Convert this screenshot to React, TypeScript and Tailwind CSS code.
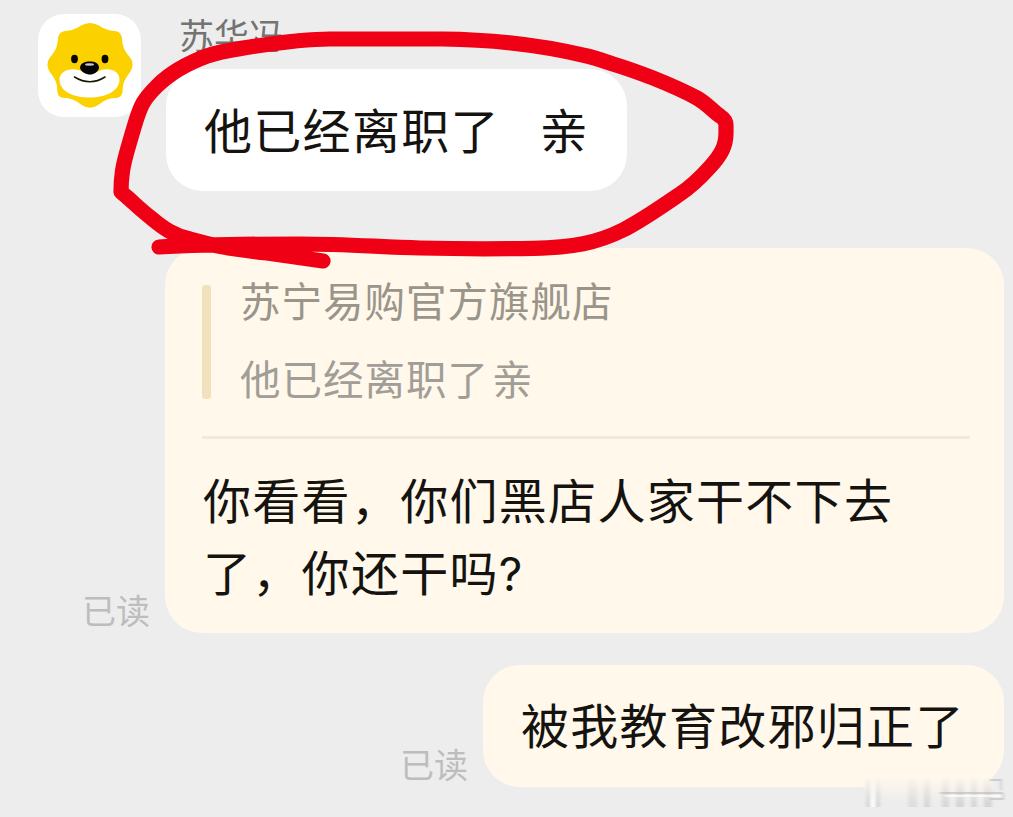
import type { ReactNode } from "react";

const FONT = "font-['Noto_Sans_CJK_SC',sans-serif]";

/** 水印竖条：x、宽度、深浅 */
const SMEARS = [
  { x: 866, w: 4, fill: "#c4c4c4", opacity: 0.6 },
  { x: 871, w: 4, fill: "#ffffff", opacity: 1 },
  { x: 876, w: 4, fill: "#c4c4c4", opacity: 0.6 },
  { x: 908, w: 9, fill: "#cccccc", opacity: 0.5 },
  { x: 924, w: 6, fill: "#c4c4c4", opacity: 0.6 },
  { x: 942, w: 7, fill: "#c8c8c8", opacity: 0.65 },
  { x: 956, w: 8, fill: "#c4c4c4", opacity: 0.65 },
  { x: 971, w: 6, fill: "#c8c8c8", opacity: 0.65 },
  { x: 984, w: 8, fill: "#c4c4c4", opacity: 0.65 },
];

function Avatar() {
  return (
    <svg viewBox="0 0 103 103" className="mt-3.5 size-[103px] shrink-0 rounded-[26px] bg-white">
      <path
        d="M43 11.500Q52 6.500 61 11.500C68 16 71 16.500 77 17Q83 17.500 84 24C84.500 31 85 34 90 41Q99 50 90 61C85 68 85 71 84.500 78Q83.500 84 77 84C69 84.500 66 87 61 90.500Q52 97 43 90.500C38 87 35 84.500 27 84Q20 84 19.500 78C19 71 19 68 14 61Q5 50 14 41C19 34 19.500 31 20 24Q21 17.500 27 17C33 16.500 36 16 43 11.500Z"
        fill="#fbd100"
      />
      <path
        d="M41 56C32 53.500 21.500 56.500 21.500 66C22 78 36 83.500 52 83.500C68 83.500 81 77 81.500 66C81.500 57 73 53.500 63 56C58 60 46 60 41 56Z"
        fill="#fff"
      />
      <ellipse cx="36.500" cy="45" rx="3.400" ry="4.200" fill="#080600" />
      <ellipse cx="67" cy="45" rx="3.400" ry="4.200" fill="#080600" />
      <path d="M42 54C42 49 47 47.500 52 47.500S61 49 61 54C60 58 56 60.500 52 60.500S43 58 42 54Z" fill="#050505" />
      <ellipse cx="51.500" cy="50.500" rx="4.500" ry="1.200" fill="#c9c9c9" />
      <path d="M36.500 63Q52 72.500 67 63" fill="none" stroke="#1c1800" strokeWidth="1.600" strokeLinecap="round" />
    </svg>
  );
}

function ReadMark() {
  return <span className="mr-[15px] pb-0.5 text-[34px] leading-[42px] text-[#bdbdbd]">已读</span>;
}

function Bubble({ className, children }: { className: string; children: ReactNode }) {
  return (
    <div className={`rounded-[37px] text-[48px] tracking-[1.3px] text-[#151310] ${className}`}>
      {children}
    </div>
  );
}

/** 红笔圈注 */
function RedCircle() {
  return (
    <svg viewBox="0 0 1013 817" className="pointer-events-none absolute inset-0 h-[817px] w-[1013px]">
      <path
        d="M159 247C205 244.500 250 244 300 244C345 244 380 247 420 248C460 249 500 249 533 248.300C573 247.500 597 243 623 230C641 221 661 207 680 194C692 186 701 177 710 167C721 155 726 146 726 133V125Q726 120 720 116C713 111 706 103 697 98C684 91 668 84 653 78C640 73 626 68 613 64C604 61 596 58 587 56C545 46 492 39.500 443 39H330C303 39 277 43 250 47C235 49.500 221 51 207 56C188 63 169 74 157 86Q147 96 143 103C138 112 136 121 132 134C128 148 124 160 122.500 171Q121 181 121 192L127 197C135 204 142 211 150 217C164 229 175 236 190 239L213 245C232 249 249 251 267 253L323 261"
        fill="none"
        stroke="#ef0014"
        strokeWidth="15.200"
        strokeLinecap="round"
        strokeLinejoin="round"
      />
    </svg>
  );
}

function Watermark() {
  return (
    <svg viewBox="0 0 1013 817" className="pointer-events-none absolute inset-0 h-[817px] w-[1013px]">
      <defs>
        <linearGradient id="fade" x1="0" y1="0" x2="0" y2="1">
          <stop offset="0" stopColor="#fff" stopOpacity="0" />
          <stop offset="0.500" stopColor="#fff" stopOpacity="0.500" />
          <stop offset="1" stopColor="#fff" />
        </linearGradient>
        <linearGradient id="base" x1="0" y1="0" x2="0" y2="1">
          <stop offset="0" stopColor="#fff8eb" />
          <stop offset="0.850" stopColor="#ededed" />
        </linearGradient>
        <mask id="fadeMask">
          <rect x="855" y="777" width="158" height="31" fill="url(#fade)" />
        </mask>
        <filter id="soft" x="-10%" y="-20%" width="120%" height="140%">
          <feGaussianBlur stdDeviation="1.700 0.700" />
        </filter>
      </defs>
      <rect x="865" y="777" width="128" height="30" fill="url(#base)" filter="url(#soft)" />
      <g mask="url(#fadeMask)">
        <g filter="url(#soft)">
          {SMEARS.map((s) => (
            <rect key={s.x} x={s.x} y="777" width={s.w} height="30" fill={s.fill} opacity={s.opacity} />
          ))}
        </g>
      </g>
      <g fill="none" opacity="0.700" filter="url(#soft)">
        <path d="M990 780H1001V790M940 793H1003M990 799H1003V793" stroke="#c0c0c0" strokeWidth="1.800" />
        <path d="M945 796H1001" stroke="#fff" strokeWidth="1.800" />
      </g>
    </svg>
  );
}

export default function App() {
  return (
    <main className={`relative h-[817px] w-[1013px] overflow-hidden bg-[#ededed] ${FONT}`}>
      <section className="flex h-[248px] items-start pl-[38px]">
        <Avatar />
        <div className="ml-[25px] pt-3">
          <div className="ml-[13px] h-[57px] text-[35px] leading-[44px] text-[#737373]">苏华冯</div>
          <Bubble className="flex h-[122px] w-[461px] items-center bg-white pb-[5px] pl-[38px]">
            <span>他已经离职了</span>
            <span className="ml-10">亲</span>
          </Bubble>
        </div>
      </section>

      <section className="flex items-end justify-end pr-[9px]">
        <ReadMark />
        <Bubble className="h-[385px] w-[839px] bg-[#fff8eb] pt-[37px] pr-[34px] pl-[37px]">
          <div className="flex h-[114px] items-center">
            <div className="h-full w-[9px] rounded-[3px] bg-[#f1e2bd]" />
            <div className="ml-[29px] pb-[7px] text-[40.5px] leading-[78px] tracking-[1px]">
              <p className="text-[#9a958a]">苏宁易购官方旗舰店</p>
              <p className="text-[#a19d97]">
                他已经离职了<span className="ml-[3px]">亲</span>
              </p>
            </div>
          </div>
          <hr className="mt-[37px] border-t-[3px] border-[#f0eadc]" />
          <p className="mt-[23px] ml-px leading-[72px] whitespace-nowrap">
            你看看，你们黑店人家干不下去
            <br />
            了，你还干吗<span className="font-['Inter',sans-serif] text-[46px]">?</span>
          </p>
        </Bubble>
      </section>

      <section className="mt-8 flex items-end justify-end pr-[9px]">
        <ReadMark />
        <Bubble className="flex h-[122px] w-[521px] items-center bg-[#fff8eb] pb-1.5 pl-[38px]">
          被我教育改邪归正了
        </Bubble>
      </section>

      <RedCircle />
      <Watermark />
    </main>
  );
}
